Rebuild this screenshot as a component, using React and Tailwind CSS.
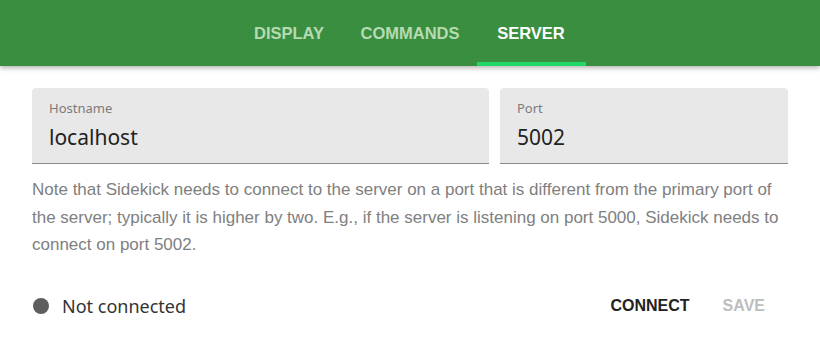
import { useState } from "react";

const tabs = ["DISPLAY", "COMMANDS", "SERVER"];

function Field({ label, value, className }) {
  return (
    <div className={`bg-[#e8e8e8] rounded-t-[4px] border-b border-[#8a8a8a] h-[76px] pl-[17px] pt-[11px] ${className}`}>
      <div className="text-[13px] leading-[18px] text-[#7b7b7b] font-['Noto_Sans',sans-serif]">{label}</div>
      <div className="text-[21px] leading-[30px] text-[#222] font-['Noto_Sans',sans-serif] mt-[5px]">{value}</div>
    </div>
  );
}

export default function App() {
  const [active, setActive] = useState("SERVER");

  return (
    <div className="w-[820px] h-[341px] bg-white overflow-hidden">
      <div className="h-[66px] bg-[#3a8e3f] shadow-[0_2px_5px_rgba(0,0,0,0.3)] flex justify-center relative z-10">
        <div className="flex">
          {tabs.map((t) => (
            <button
              key={t}
              onClick={() => setActive(t)}
              className={`relative min-w-[109px] px-[17px] h-[66px] text-[16.5px] font-bold font-['Liberation_Sans',sans-serif] ${
                active === t ? "text-white" : "text-[#b6dbb3]"
              }`}
            >
              {t}
              {active === t && (
                <span className="absolute left-0 right-0 bottom-0 h-[4px] bg-[#20d86a]" />
              )}
            </button>
          ))}
        </div>
      </div>

      <div className="px-[32px] pt-[22px]">
        <div className="flex gap-[11px]">
          <Field label="Hostname" value="localhost" className="w-[457px]" />
          <Field label="Port" value="5002" className="flex-1" />
        </div>

        <p className="mt-[12px] text-[17px] leading-[27.5px] text-[#808080] font-['Liberation_Sans',sans-serif]">
          Note that Sidekick needs to connect to the server on a port that is different from the primary port of the server; typically it is higher by two. E.g., if the server is listening on port 5000, Sidekick needs to connect on port 5002.
        </p>

        <div className="mt-[34px] flex items-center">
          <span className="w-[16px] h-[16px] rounded-full bg-[#5e5e5e] ml-[1px]" />
          <span className="ml-[13px] text-[18px] text-[#333] font-['Noto_Sans',sans-serif]">Not connected</span>
          <div className="ml-auto flex items-center gap-[33px] pr-[23px]">
            <button className="text-[16px] font-semibold text-[#222] font-['Liberation_Sans',sans-serif]">CONNECT</button>
            <button className="text-[16px] font-semibold text-[#bdbdbd] font-['Liberation_Sans',sans-serif]">SAVE</button>
          </div>
        </div>
      </div>
    </div>
  );
}
